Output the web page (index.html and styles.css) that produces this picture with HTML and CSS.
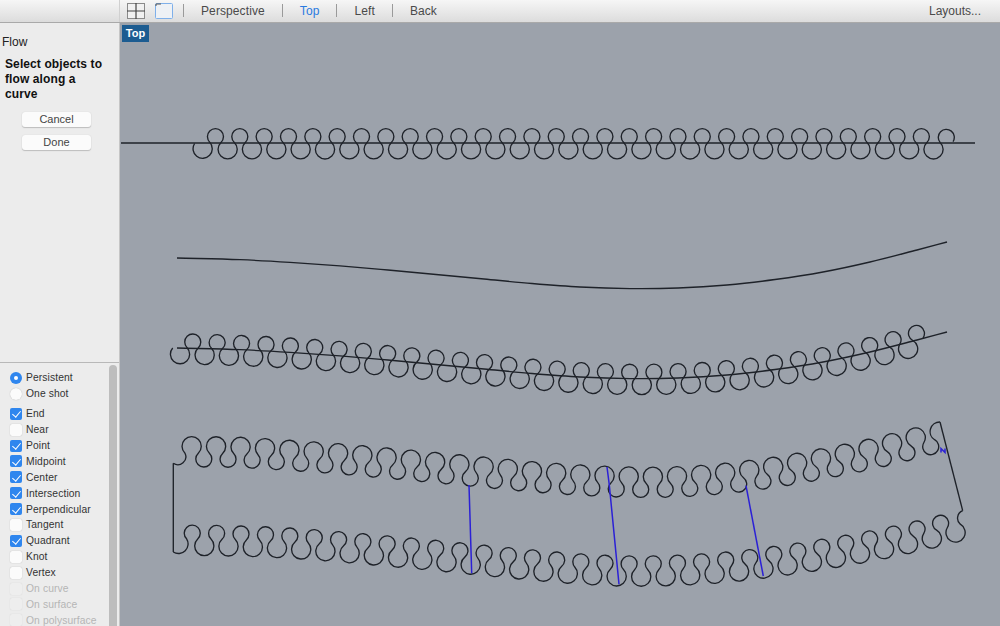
FILE: index.html
```html
<!DOCTYPE html>
<html lang="en">
<head>
  <meta charset="UTF-8">
  <title>Flow along curve</title>
  <link rel="stylesheet" href="styles.css">
</head>
<body>
  <div class="topbar">
    <div class="topbar-left"></div>
    <div class="topbar-main">
      <svg class="pane-icon" width="18" height="16" viewBox="0 0 18 16">
        <rect x="0.5" y="0.5" width="17" height="15" fill="#f1f1f1" stroke="#8a8a8a"/>
        <path d="M9 0V16M0 8H18" stroke="#444" stroke-width="1.2"/>
      </svg>
      <svg class="pane-icon single" width="18" height="16" viewBox="0 0 18 16">
        <rect x="0.5" y="0.5" width="17" height="15" rx="1" fill="#eef1f5" stroke="#7fb0ea"/>
        <path d="M1 1H6M1 1V3" stroke="#555"/>
      </svg>
      <span class="sep"></span>
      <span class="tab">Perspective</span>
      <span class="sep"></span>
      <span class="tab active">Top</span>
      <span class="sep"></span>
      <span class="tab">Left</span>
      <span class="sep"></span>
      <span class="tab">Back</span>
      <span class="layouts">Layouts...</span>
    </div>
  </div>

  <div class="main">
    <div class="side">
      <div class="command">
        <div class="command-name">Flow</div>
        <div class="prompt">Select objects to flow along a curve</div>
        <button class="btn">Cancel</button>
        <button class="btn">Done</button>
      </div>
      <div class="osnaps">
        <div class="osnap-list">
          <div class="row"><span class="radio on"></span>Persistent</div>
          <div class="row"><span class="radio"></span>One shot</div>
          <div class="rows">
            <div class="row"><span class="box on"></span>End</div>
            <div class="row"><span class="box"></span>Near</div>
            <div class="row"><span class="box on"></span>Point</div>
            <div class="row"><span class="box on"></span>Midpoint</div>
            <div class="row"><span class="box on"></span>Center</div>
            <div class="row"><span class="box on"></span>Intersection</div>
            <div class="row"><span class="box on"></span>Perpendicular</div>
            <div class="row"><span class="box"></span>Tangent</div>
            <div class="row"><span class="box on"></span>Quadrant</div>
            <div class="row"><span class="box"></span>Knot</div>
            <div class="row"><span class="box"></span>Vertex</div>
            <div class="row off"><span class="box"></span>On curve</div>
            <div class="row off"><span class="box"></span>On surface</div>
            <div class="row off"><span class="box"></span>On polysurface</div>
          </div>
        </div>
        <div class="scrollbar"><div class="thumb"></div></div>
      </div>
    </div>

    <div class="viewport">
      <div class="view-label">Top</div>
      <svg id="canvas" class="canvas" viewBox="120 23 880 603" width="880" height="603"></svg>
    </div>
  </div>

  <script src="script.js"></script>
</body>
</html>
```

FILE: styles.css
```css
* {
  box-sizing: border-box;
}
html, body {
  margin: 0;
  height: 100%;
  overflow: hidden;
}
body {
  width: 1000px;
  height: 626px;
  font-family: "Liberation Sans", Arial, sans-serif;
  font-size: 11px;
  color: #222;
  background: #ececec;
}
.topbar {
  display: flex;
  height: 23px;
  background: linear-gradient(#f6f6f6, #dcdcdc);
  border-bottom: 1px solid #a9a9a9;
}
.topbar-left {
  width: 120px;
  border-right: 1px solid #d0d0d0;
}
.topbar-main {
  flex: 1;
  display: flex;
  align-items: center;
  padding-left: 7px;
  padding-right: 19px;
  font-size: 12px;
  color: #4a4a4a;
}
.pane-icon {
  margin-right: 10px;
  margin-bottom: 1px;
}
.sep {
  width: 1px;
  height: 13px;
  background: #9a9a9a;
  margin-bottom: 1px;
}
.tab {
  padding: 0 17px;
  letter-spacing: 0.1px;
}
.tab.active {
  color: #2a7ae0;
}
.layouts {
  margin-left: auto;
}
.main {
  display: flex;
  height: 603px;
}
.side {
  width: 120px;
  display: flex;
  flex-direction: column;
  border-right: 1px solid #c6c6c6;
}
.command {
  height: 340px;
  border-bottom: 1px solid #b8b8b8;
}
.command-name {
  padding: 12px 0 0 2px;
  font-size: 12px;
  line-height: 14px;
}
.prompt {
  padding: 8px 12px 0 5px;
  font-size: 12px;
  letter-spacing: 0.1px;
  line-height: 15px;
  font-weight: bold;
  color: #111;
  margin-bottom: 10px;
}
.btn {
  display: block;
  width: 69px;
  height: 15px;
  margin: 0 0 8px 22px;
  padding: 0;
  border: none;
  border-radius: 3px;
  background: #fbfbfb;
  box-shadow: 0 1px 1px #bdbdbd, 0 0 1px #c9c9c9;
  font-family: inherit;
  font-size: 11px;
  line-height: 15px;
  color: #444;
}
.osnaps {
  flex: 1;
  display: flex;
  overflow: hidden;
}
.osnap-list {
  flex: 1;
  padding: 7px 0 0 10px;
}
.rows {
  margin-top: 4px;
}
.row {
  display: flex;
  align-items: center;
  height: 15.9px;
  font-size: 10.3px;
  letter-spacing: 0.1px;
  color: #333;
}
.row.off {
  color: #b5b5b5;
}
.radio, .box {
  position: relative;
  flex: none;
  width: 12px;
  height: 12px;
  margin-right: 4px;
  background: #fbfbfb;
  box-shadow: 0 0 1px #a5a5a5;
}
.radio {
  border-radius: 50%;
}
.box {
  border-radius: 2px;
}
.row.off .box {
  background: #eeeeee;
  box-shadow: 0 0 1px #cccccc;
}
.radio.on, .box.on {
  background: #2f86ee;
  box-shadow: none;
}
.radio.on::after {
  content: "";
  position: absolute;
  left: 4px;
  top: 4px;
  width: 4px;
  height: 4px;
  border-radius: 50%;
  background: #fff;
}
.box.on::after {
  content: "";
  position: absolute;
  left: 4px;
  top: 1.5px;
  width: 4px;
  height: 7px;
  border: solid #fff;
  border-width: 0 1.5px 1.5px 0;
  transform: rotate(40deg);
}
.scrollbar {
  width: 11px;
  padding: 2px 1px 0 1px;
}
.thumb {
  width: 8px;
  height: 300px;
  border-radius: 4px;
  background: #bdbdbd;
}
.viewport {
  position: relative;
  flex: 1;
  background: #9ca2ab;
}
.canvas {
  display: block;
}
.view-label {
  position: absolute;
  left: 2px;
  top: 2px;
  width: 27px;
  height: 17px;
  background: #1c5c91;
  color: #fff;
  font-size: 11px;
  font-weight: bold;
  line-height: 17px;
  text-align: center;
}
.curve {
  fill: none;
  stroke: #1e2229;
  stroke-width: 1.35;
  stroke-linejoin: round;
}
.guide {
  fill: none;
  stroke: #2b20d6;
  stroke-width: 1.5;
}
```

FILE: script.js
```js
const STEP = 12.17;
const HALF = 6.35;
const SMALL = 8;
const BIG = 9.6;

// centre line of each strip, measured as x,y pairs
const flowCurve = [[177,348],[240,349.7],[290,352.3],[340,355.8],[388,360],[436,364.5],[484,369],[532,373.5],[580,377],[630,378.6],[678,378],[727,375],[775,369.5],[823,362],[870,352],[917,340],[947,332]];
const upperRail = [[170,452.5],[240,453.2],[289,456.2],[338,459.6],[387,463.9],[435,468.4],[483,473],[532,477.5],[580,480.9],[629,482.9],[677,482.6],[725,479.2],[773,473.2],[821,464.9],[869,455.2],[916,443.9],[950,435]];
const lowerRail = [[170,539.2],[241.7,540.3],[290.7,542.4],[339,546],[387.7,550.3],[436,554.7],[484,559.6],[533,564.3],[582,568.3],[630,570.3],[678,569.5],[727,566.3],[775,560.7],[823,553.6],[870,545.3],[918,535.3],[975,521]];
const straight = [[100,143],[1000,143]];

function slopeAt(t, i) {
  const a = t[Math.max(i - 1, 0)], b = t[Math.min(i + 1, t.length - 1)];
  return (b[1] - a[1]) / (b[0] - a[0]);
}

function yAt(t, x) {
  let i = 0;
  while (i < t.length - 2 && x > t[i + 1][0]) i++;
  const [x0, y0] = t[i], [x1, y1] = t[i + 1];
  const h = x1 - x0, u = (x - x0) / h;
  const m0 = slopeAt(t, i) * h, m1 = slopeAt(t, i + 1) * h;
  return (2*u*u*u - 3*u*u + 1) * y0 + (u*u*u - 2*u*u + u) * m0 + (-2*u*u*u + 3*u*u) * y1 + (u*u*u - u*u) * m1;
}

function centres(t, startX, count, lowerR, upperR) {
  const out = [];
  let x = startX;
  for (let i = 0; i < count; i++) {
    const slope = (yAt(t, x + 1) - yAt(t, x - 1)) / 2;
    const a = Math.atan(slope);
    const lower = i % 2 === 0;
    const v = lower ? HALF : -HALF;
    out.push({ x: x - Math.sin(a) * v, y: yAt(t, x) + Math.cos(a) * v, r: lower ? lowerR : upperR, lower });
    x += STEP * Math.cos(a);
  }
  return out;
}

// chain of tangent arcs; start and end are [x, y, largeArcFlag]
function strip(t, o) {
  const c = centres(t, o.x, o.count, o.lowerR, o.upperR);
  let d = `M${o.start[0]} ${o.start[1]}`;
  c.forEach((p, i) => {
    const next = c[i + 1];
    let ex, ey, large = 1;
    if (i === 0) large = o.start[2];
    if (next) {
      const k = p.r / (p.r + next.r);
      ex = p.x + (next.x - p.x) * k;
      ey = p.y + (next.y - p.y) * k;
    } else {
      [ex, ey, large] = o.end;
    }
    d += `A${p.r} ${p.r} 0 ${large} ${p.lower ? 0 : 1} ${ex.toFixed(1)} ${ey.toFixed(1)}`;
  });
  return d;
}

function smooth(t) {
  let d = `M${t[0][0]} ${t[0][1]}`;
  for (let i = 0; i < t.length - 1; i++) {
    const h = (t[i + 1][0] - t[i][0]) / 3;
    d += `C${t[i][0] + h} ${t[i][1] + slopeAt(t, i) * h} ${t[i + 1][0] - h} ${t[i + 1][1] - slopeAt(t, i + 1) * h} ${t[i + 1][0]} ${t[i + 1][1]}`;
  }
  return d;
}

const secondCurve = flowCurve.map(([x, y]) => [x, y - 90]);

const curves = [
  "M121 143H975",
  strip(straight, { x: 203.3, count: 62, lowerR: BIG, upperR: SMALL, start: [194.6, 143.5, 1], end: [953, 141.7, 1] }),
  smooth(secondCurve),
  smooth(flowCurve),
  strip(flowCurve, { x: 180.5, count: 62, lowerR: BIG, upperR: SMALL, start: [172.7, 348, 1], end: [923, 338, 1] }),
  strip(upperRail, { x: 179.5, count: 64, lowerR: SMALL, upperR: BIG, start: [173.3, 463.3, 0], end: [940, 422, 0] }),
  strip(lowerRail, { x: 180, count: 66, lowerR: BIG, upperR: SMALL, start: [173.3, 552, 0], end: [962.7, 510.7, 0] }),
  "M173.3 463.3V552",
  "M940 422L962.7 510.7"
];

const guides = [
  "M469 485L471.7 573.3",
  "M607 467L609.3 485L619 584.3",
  "M746 485.7L763.3 576",
  "M941 452.5V448.5L945 452.5V448.5"
];

const svg = document.getElementById("canvas");
const add = (d, cls) => {
  const p = document.createElementNS("http://www.w3.org/2000/svg", "path");
  p.setAttribute("d", d);
  p.setAttribute("class", cls);
  svg.appendChild(p);
};
curves.forEach(d => add(d, "curve"));
guides.forEach(d => add(d, "guide"));
```
